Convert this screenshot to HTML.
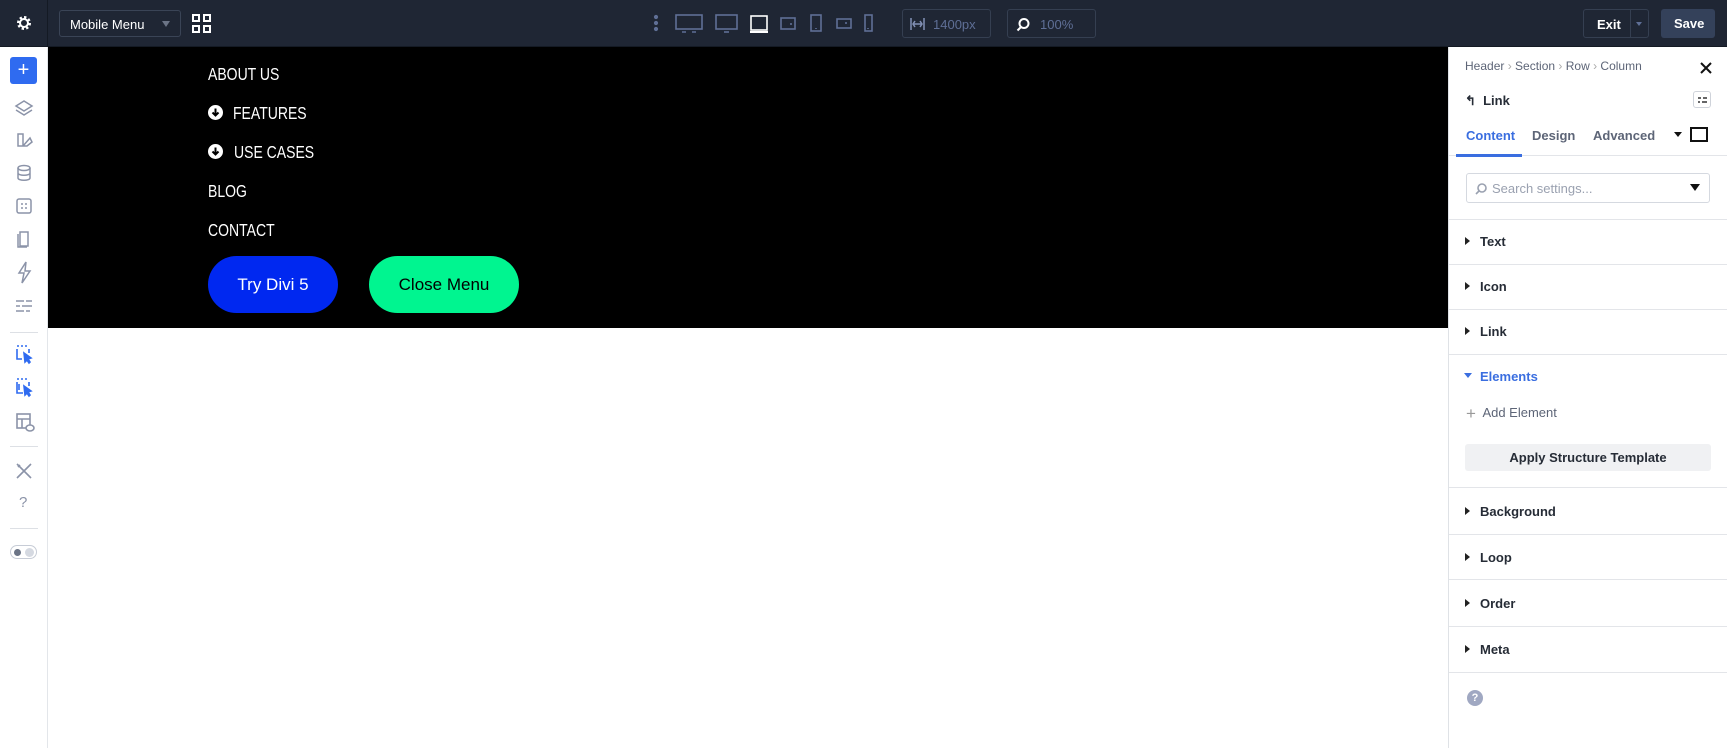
<!DOCTYPE html>
<html><head><meta charset="utf-8"><style>
*{box-sizing:border-box;margin:0;padding:0}
body{width:1727px;height:748px;overflow:hidden;background:#fff;font-family:"Liberation Sans",sans-serif;position:relative}
.a{position:absolute}
.top{left:0;top:0;width:1727px;height:47px;background:#1f2634;border-bottom:1px solid #141a24}
.side{left:0;top:47px;width:48px;height:701px;background:#fff;border-right:1px solid #e3e6ea}
.canvas{left:48px;top:47px;width:1400px;height:281px;background:#000}
.menu{color:#fff;font-size:17.5px;left:208px;transform:scaleX(.8);transform-origin:0 0}
.panel{left:1448px;top:47px;width:279px;height:701px;background:#fff;border-left:1px solid #dfe2e6}
.sep{left:1449px;width:278px;height:1px;background:#e3e5e9}
.sec{left:1480px;font-size:13px;font-weight:bold;color:#262c36}
.tri{position:absolute;left:-15px;top:3px;width:0;height:0;border-top:4px solid transparent;border-bottom:4px solid transparent;border-left:5px solid #222}
</style></head><body>
<div class="a top"></div>
<svg class="a" style="left:15px;top:14px" width="18" height="18" viewBox="0 0 18 18"><circle cx="9" cy="9" r="5.5" fill="none" stroke="#fff" stroke-width="3" stroke-dasharray="2.2 2.1"/><circle cx="9" cy="9" r="4" fill="none" stroke="#fff" stroke-width="2"/></svg>
<div class="a" style="left:47px;top:0;width:1px;height:47px;background:#141a24"></div>
<div class="a" style="left:59px;top:10px;width:122px;height:27px;border:1px solid #3a4456;border-radius:3px;color:#fff;font-size:13px;padding:6px 10px">Mobile Menu<span style="position:absolute;right:10px;top:10px;border-left:4px solid transparent;border-right:4px solid transparent;border-top:6px solid #6b7486"></span></div>
<svg class="a" style="left:192px;top:14px" width="19" height="19" viewBox="0 0 19 19" fill="none" stroke="#fff" stroke-width="2"><rect x="1" y="1" width="6" height="6"/><rect x="12" y="1" width="6" height="6"/><rect x="1" y="12" width="6" height="6"/><rect x="12" y="12" width="6" height="6"/></svg>
<svg class="a" style="left:650px;top:10px" width="230" height="26" viewBox="0 0 230 26" fill="none" stroke="#5f6f96" stroke-width="1.6">
<circle cx="6" cy="7" r="1.3" fill="#5f6f96"/><circle cx="6" cy="13" r="1.3" fill="#5f6f96"/><circle cx="6" cy="19" r="1.3" fill="#5f6f96"/>
<rect x="26" y="5" width="26" height="14"/><path d="M32 22h4M42 22h4"/>
<rect x="66" y="5" width="21" height="14"/><path d="M74 22h5"/>
<rect x="101" y="6" width="16" height="14" stroke="#fff"/><path d="M100 22h18" stroke="#fff" stroke-width="2"/>
<rect x="131" y="8" width="14" height="11"/><path d="M140 14h2"/>
<rect x="161" y="5" width="10" height="16"/><path d="M166 18v1"/>
<rect x="187" y="9" width="14" height="9"/><path d="M195 13h2"/>
<rect x="215" y="5" width="7" height="16"/><path d="M218 18v1"/>
</svg>
<div class="a" style="left:902px;top:9px;width:89px;height:29px;border:1px solid #353f51;border-radius:3px;color:#5f6f96;font-size:13px;padding:7px 0 0 30px">1400px<svg style="position:absolute;left:7px;top:8px" width="15" height="12" fill="none" stroke="#8290b5" stroke-width="1.5"><path d="M1 0v12M14 0v12M3 6h9M5 3l-2 3 2 3M10 3l2 3-2 3"/></svg></div>
<div class="a" style="left:1007px;top:9px;width:89px;height:29px;border:1px solid #353f51;border-radius:3px;color:#5f6f96;font-size:13px;padding:7px 0 0 32px">100%<svg style="position:absolute;left:8px;top:7px" width="15" height="15" fill="none" stroke="#fff" stroke-width="2"><circle cx="8" cy="6.5" r="4.5"/><path d="M5 10l-3.5 3.5"/></svg></div>
<div class="a" style="left:1583px;top:9px;width:66px;height:29px;border:1px solid #353f51;border-radius:3px;color:#fff;font-size:13px;font-weight:bold;padding:7px 0 0 13px">Exit<span style="position:absolute;left:46px;top:0;width:1px;height:27px;background:#353f51"></span><span style="position:absolute;right:6px;top:12px;border-left:3px solid transparent;border-right:3px solid transparent;border-top:4px solid #5f6f96"></span></div>
<div class="a" style="left:1661px;top:9px;width:54px;height:29px;background:#34415a;border-radius:3px;color:#fff;font-size:13px;font-weight:bold;padding:7px 0 0 13px">Save</div>
<div class="a side"></div>
<div class="a" style="left:10px;top:57px;width:27px;height:27px;background:#2f6bf0;border-radius:3px;color:#fff;font-size:20px;text-align:center;line-height:26px">+</div>
<svg class="a" style="left:14px;top:98px" width="20" height="230" viewBox="0 0 20 230" fill="none" stroke="#8b93a8" stroke-width="1.5">
<path d="M10 3l8 5-8 5-8-5zM2 12l8 5 8-5"/>
<path d="M4 36h5v12H4zM9 48l7-8 2 4-5 4z"/>
<ellipse cx="10" cy="70" rx="6" ry="2.5"/><path d="M4 70v10c0 3 12 3 12 0V70M4 75c0 3 12 3 12 0"/>
<rect x="3" y="101" width="14" height="14" rx="2"/><path d="M7 106h2M11 106h2M7 110h2M11 110h2"/>
<path d="M6 134h8v14H6zM4 136v13h9"/>
<path d="M12 164l-7 11h5l-2 10 8-12h-5z"/>
<path d="M2 203h8M12 203h6M2 208h4M8 208h10M2 213h8M12 213h4"/>
</svg>
<div class="a" style="left:10px;top:332px;width:28px;height:1px;background:#dde0e5"></div>
<svg class="a" style="left:14px;top:345px" width="22" height="90" fill="none" stroke="#2f6bf0" stroke-width="1.6">
<path d="M3 1h2M7 1h2M11 1h2M3 4v10h5M15 4v4"/><path d="M10 8l7 5-3 1 2 3-1 1-2-3-2 2z" fill="#2f6bf0"/>
<path d="M3 34h2M7 34h2M11 34h2M3 37v11h6M15 37v4M5 39v6"/><path d="M10 41l7 5-3 1 2 3-1 1-2-3-2 2z" fill="#2f6bf0"/>
<g stroke="#8b93a8"><rect x="3" y="69" width="13" height="14"/><path d="M3 74h13M8 74v9"/><ellipse cx="16" cy="83" rx="4" ry="3" fill="#fff"/></g>
</svg>
<div class="a" style="left:10px;top:446px;width:28px;height:1px;background:#dde0e5"></div>
<svg class="a" style="left:15px;top:462px" width="18" height="18" fill="none" stroke="#8b93a8" stroke-width="1.6"><path d="M2 2l14 14M16 2L2 16M3 5l2-2M13 13l2 2"/></svg>
<div class="a" style="left:19px;top:494px;color:#8b93a8;font-size:15px">?</div>
<div class="a" style="left:10px;top:528px;width:28px;height:1px;background:#dde0e5"></div>
<div class="a" style="left:10px;top:545px;width:27px;height:14px;border:1px solid #c7ccd6;border-radius:7px"><span style="position:absolute;left:3px;top:3px;width:7px;height:7px;border-radius:50%;background:#6b7486"></span><span style="position:absolute;right:2px;top:2px;width:9px;height:9px;border-radius:50%;background:#d5d9e1"></span></div>
<div class="a canvas"></div>
<div class="a menu" style="top:64px">ABOUT US</div>
<div class="a menu" style="top:103px;left:233px">FEATURES</div>
<div class="a menu" style="top:142px;left:234px">USE CASES</div>
<svg class="a" style="left:208px;top:105px" width="15" height="15"><circle cx="7.5" cy="7.5" r="7.5" fill="#fff"/><path d="M7.5 3.5v7M4.5 7.5l3 3 3-3" stroke="#000" stroke-width="2" fill="none"/></svg>
<svg class="a" style="left:208px;top:144px" width="15" height="15"><circle cx="7.5" cy="7.5" r="7.5" fill="#fff"/><path d="M7.5 3.5v7M4.5 7.5l3 3 3-3" stroke="#000" stroke-width="2" fill="none"/></svg>
<div class="a menu" style="top:181px">BLOG</div>
<div class="a menu" style="top:220px">CONTACT</div>
<div class="a" style="left:208px;top:256px;width:130px;height:57px;border-radius:29px;background:#0028f0;color:#fff;font-size:17px;text-align:center;line-height:57px">Try Divi 5</div>
<div class="a" style="left:369px;top:256px;width:150px;height:57px;border-radius:29px;background:#00f590;color:#000;font-size:17px;text-align:center;line-height:57px">Close Menu</div>
<div class="a panel"></div>
<div class="a" style="left:1465px;top:59px;font-size:12px;color:#5d6577">Header <span style="color:#aaa">›</span> Section <span style="color:#aaa">›</span> Row <span style="color:#aaa">›</span> Column</div>
<svg class="a" style="left:1700px;top:62px" width="12" height="12" stroke="#111" stroke-width="2"><path d="M1 1l10 10M11 1L1 11"/></svg>
<div class="a" style="left:1465px;top:93px;font-size:13px;font-weight:bold;color:#262c36">↰ &nbsp;Link</div>
<div class="a" style="left:1693px;top:91px;width:18px;height:17px;border:1px solid #cfd3da;border-radius:3px"><svg style="position:absolute;left:4px;top:4px" width="9" height="8" stroke="#333" stroke-width="1.4"><path d="M0 2h3M5 2h4M0 6h2M4 6h5"/></svg></div>
<div class="a" style="left:1466px;top:128px;font-size:13px;font-weight:bold;color:#3a6ee0">Content</div>
<div class="a" style="left:1532px;top:128px;font-size:13px;font-weight:bold;color:#5d6577">Design</div>
<div class="a" style="left:1593px;top:128px;font-size:13px;font-weight:bold;color:#5d6577">Advanced</div>
<div class="a" style="left:1674px;top:132px;border-left:4px solid transparent;border-right:4px solid transparent;border-top:5px solid #111"></div>
<div class="a" style="left:1690px;top:127px;width:18px;height:15px;border:2px solid #111"></div>
<div class="a sep" style="top:155px"></div>
<div class="a" style="left:1456px;top:154px;width:66px;height:3px;background:#3a6ee0"></div>
<div class="a" style="left:1466px;top:173px;width:244px;height:30px;border:1px solid #d5d9e0;border-radius:3px;font-size:13px;color:#9aa1b0;padding:7px 0 0 25px">Search settings...<svg style="position:absolute;left:8px;top:9px" width="12" height="12" fill="none" stroke="#9aa1b0" stroke-width="1.6"><circle cx="7" cy="5" r="4"/><path d="M4 8l-3 3"/></svg><span style="position:absolute;right:9px;top:10px;border-left:5px solid transparent;border-right:5px solid transparent;border-top:7px solid #111"></span></div>
<div class="a sep" style="top:219px"></div>
<div class="a sec" style="top:234px"><i class="tri"></i>Text</div>
<div class="a sep" style="top:264px"></div>
<div class="a sec" style="top:279px"><i class="tri"></i>Icon</div>
<div class="a sep" style="top:309px"></div>
<div class="a sec" style="top:324px"><i class="tri"></i>Link</div>
<div class="a sep" style="top:354px"></div>
<div class="a sec" style="top:369px;color:#3a6ee0"><i class="tri" style="border:none;border-left:4px solid transparent;border-right:4px solid transparent;border-top:5px solid #3a6ee0;top:4px;left:-16px"></i>Elements</div>
<div class="a" style="left:1466px;top:404px;font-size:13px;color:#5d6577"><span style="color:#999;font-size:17px;vertical-align:-2px">+</span>&nbsp; Add Element</div>
<div class="a" style="left:1465px;top:444px;width:246px;height:27px;background:#f0f1f3;border-radius:3px;font-size:13px;font-weight:bold;color:#262c36;text-align:center;line-height:27px">Apply Structure Template</div>
<div class="a sep" style="top:487px"></div>
<div class="a sec" style="top:504px"><i class="tri"></i>Background</div>
<div class="a sep" style="top:534px"></div>
<div class="a sec" style="top:550px"><i class="tri"></i>Loop</div>
<div class="a sep" style="top:579px"></div>
<div class="a sec" style="top:596px"><i class="tri"></i>Order</div>
<div class="a sep" style="top:626px"></div>
<div class="a sec" style="top:642px"><i class="tri"></i>Meta</div>
<div class="a sep" style="top:672px"></div>
<div class="a" style="left:1467px;top:690px;width:16px;height:16px;border-radius:50%;background:#a0a8c2;color:#fff;font-size:11px;font-weight:bold;text-align:center;line-height:16px">?</div>
</body></html>
